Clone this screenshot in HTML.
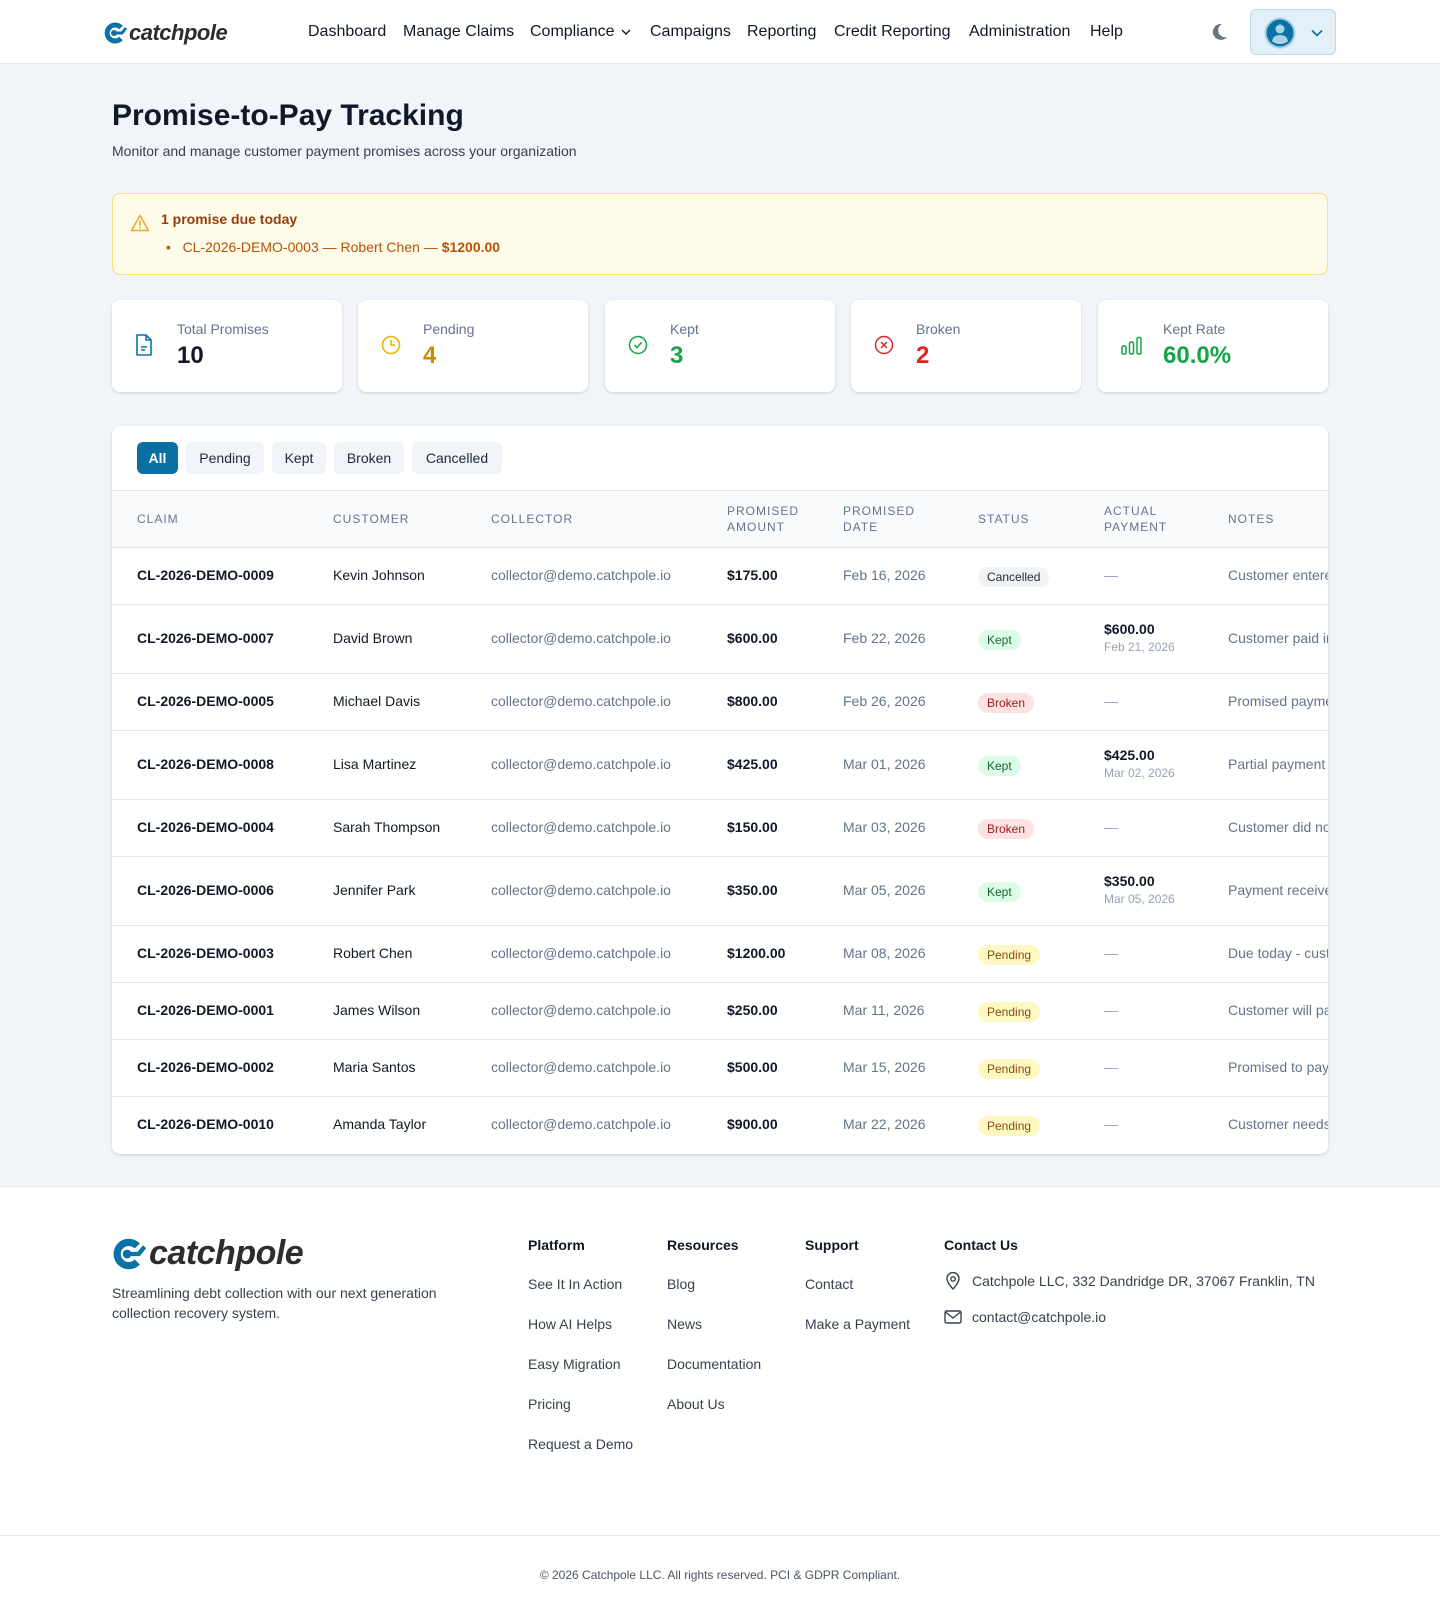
<!DOCTYPE html>
<html><head><meta charset="utf-8"><style>
*{box-sizing:border-box;margin:0;padding:0}
body{width:1440px;height:1608px;background:#f1f4f8;font-family:"Liberation Sans",sans-serif;color:#111827;position:relative;overflow:hidden}
.hdr{position:absolute;left:0;top:0;width:1440px;height:64px;background:#fff;border-bottom:1px solid #e5e7eb}
.logo{position:absolute;display:flex;align-items:center}
.logo span{font-weight:bold;font-style:italic;color:#2d2d2d;letter-spacing:-0.5px}
.nav{position:absolute;top:23px;font-size:16px;color:#111827}
.abs{position:absolute}
.card{position:absolute;background:#fff;border-radius:8px;box-shadow:0 1px 3px rgba(0,0,0,.1),0 1px 2px rgba(0,0,0,.06)}
.lbl{position:absolute;left:65px;top:21px;font-size:14px;color:#64748b}
.val{position:absolute;left:65px;top:42px;font-size:24px;font-weight:bold}
.ico{position:absolute;left:23px;top:36px}
.tab{position:absolute;top:442px;height:32px;line-height:32px;font-size:14px;border-radius:6px;background:#f1f4f8;color:#1f2937;text-align:center}
.th{position:absolute;font-size:12px;letter-spacing:1px;color:#64748b;line-height:16px}
.row{position:absolute;left:0;width:1216px;border-top:1px solid #e2e8f0;font-size:14px}
.row div{position:absolute;white-space:nowrap}
.b{font-size:12px;padding:0 9px;height:20px;line-height:20px;border-radius:10px}
.fh{position:absolute;top:1237px;font-size:14px;font-weight:bold;color:#111827}
.fl{position:absolute;font-size:14px;color:#374151}
</style></head><body>
<div class="hdr">
 <div class="logo" style="left:104px;top:20px">
  <svg width="24" height="22" viewBox="0 0 24 22"><path d="M17 5.5A8 8 0 1 0 17 16.5" fill="none" stroke="#0b72a8" stroke-width="5"/><circle cx="10" cy="11" r="3" fill="#0b72a8"/><path d="M12 11h6l4-5" fill="none" stroke="#0b72a8" stroke-width="3"/></svg>
  <span style="font-size:22px;margin-left:1px">catchpole</span>
 </div>
 <div class="nav" style="left:308px">Dashboard</div>
 <div class="nav" style="left:403px">Manage Claims</div>
 <div class="nav" style="left:530px">Compliance <svg width="10" height="8" viewBox="0 0 10 8" style="margin-left:2px"><path d="M1 2l4 4 4-4" fill="none" stroke="#111827" stroke-width="1.4"/></svg></div>
 <div class="nav" style="left:650px">Campaigns</div>
 <div class="nav" style="left:747px">Reporting</div>
 <div class="nav" style="left:834px">Credit Reporting</div>
 <div class="nav" style="left:969px">Administration</div>
 <div class="nav" style="left:1090px">Help</div>
 <svg class="abs" style="left:1209px;top:22px" width="20" height="20" viewBox="0 0 20 20"><path d="M13 2a8 8 0 1 0 5 13A7 7 0 0 1 13 2z" fill="#6b7280"/></svg>
 <div class="abs" style="left:1250px;top:9px;width:86px;height:46px;border:1px solid #b9dbea;background:#e4f0f7;border-radius:6px">
  <svg class="abs" style="left:13px;top:7px" width="32" height="32" viewBox="0 0 32 32"><circle cx="16" cy="16" r="15.5" fill="#a9d2e4"/><circle cx="16" cy="16" r="13.5" fill="#0b72a8"/><circle cx="16" cy="12" r="4.5" fill="#a9d2e4"/><path d="M8 24c1-5 5-6 8-6s7 1 8 6c-2 2-5 3-8 3s-6-1-8-3z" fill="#a9d2e4"/></svg>
  <svg class="abs" style="left:60px;top:19px" width="12" height="8" viewBox="0 0 12 8"><path d="M1 1.5l5 5 5-5" fill="none" stroke="#0b72a8" stroke-width="1.6"/></svg>
 </div>
</div>

<div class="abs" style="left:112px;top:99px;font-size:30px;font-weight:bold;color:#111827">Promise-to-Pay Tracking</div>
<div class="abs" style="left:112px;top:143px;font-size:14px;color:#374151">Monitor and manage customer payment promises across your organization</div>

<div class="abs" style="left:112px;top:193px;width:1216px;height:82px;background:#fefbe8;border:1px solid #fcdf7e;border-radius:8px">
 <svg class="abs" style="left:17px;top:20px" width="20" height="18" viewBox="0 0 20 18"><path d="M10 1.5L1.5 16.5h17z" fill="none" stroke="#f0a82a" stroke-width="1.5" stroke-linejoin="round"/><path d="M10 7v4.5M10 13.5v.5" stroke="#f0a82a" stroke-width="1.6" stroke-linecap="round"/></svg>
 <div class="abs" style="left:48px;top:17px;font-size:14px;color:#92400e;font-weight:bold">1 promise due today</div>
 <div class="abs" style="left:53px;top:45px;font-size:14px;color:#b45309">•&nbsp;&nbsp;&nbsp;CL-2026-DEMO-0003 — Robert Chen — <b>$1200.00</b></div>
</div>

<div class="card" style="left:112px;top:300px;width:230px;height:92px">
 <svg class="ico" style="top:34px" width="18" height="22" viewBox="0 0 18 22"><path d="M2 1h9l5 5v15H2z" fill="none" stroke="#0b72a8" stroke-width="1.6" stroke-linejoin="round"/><path d="M11 1v5h5M6 13h6M6 16h4" fill="none" stroke="#0b72a8" stroke-width="1.6"/></svg>
 <div class="lbl">Total Promises</div><div class="val" style="color:#111827">10</div></div>
<div class="card" style="left:358px;top:300px;width:230px;height:92px">
 <svg class="ico" style="top:35px" width="20" height="20" viewBox="0 0 20 20"><circle cx="10" cy="10" r="8.5" fill="none" stroke="#eab308" stroke-width="1.6"/><path d="M10 5v5h4" fill="none" stroke="#eab308" stroke-width="1.6"/></svg>
 <div class="lbl">Pending</div><div class="val" style="color:#ca8a04">4</div></div>
<div class="card" style="left:605px;top:300px;width:230px;height:92px">
 <svg class="ico" style="top:35px" width="20" height="20" viewBox="0 0 20 20"><circle cx="10" cy="10" r="8.5" fill="none" stroke="#16a34a" stroke-width="1.5"/><path d="M6.5 10l2.5 2.5 4.5-5" fill="none" stroke="#16a34a" stroke-width="1.5"/></svg>
 <div class="lbl">Kept</div><div class="val" style="color:#16a34a">3</div></div>
<div class="card" style="left:851px;top:300px;width:230px;height:92px">
 <svg class="ico" style="top:35px" width="20" height="20" viewBox="0 0 20 20"><circle cx="10" cy="10" r="8.5" fill="none" stroke="#dc2626" stroke-width="1.5"/><path d="M7 7l6 6M13 7l-6 6" stroke="#dc2626" stroke-width="1.5"/></svg>
 <div class="lbl">Broken</div><div class="val" style="color:#dc2626">2</div></div>
<div class="card" style="left:1098px;top:300px;width:230px;height:92px">
 <svg class="ico" style="top:36px" width="22" height="20" viewBox="0 0 22 20"><rect x="1" y="10" width="4" height="8" rx="1.5" fill="none" stroke="#16a34a" stroke-width="1.5"/><rect x="8.5" y="6" width="4" height="12" rx="1.5" fill="none" stroke="#16a34a" stroke-width="1.5"/><rect x="16" y="1.5" width="4" height="16.5" rx="1.5" fill="none" stroke="#16a34a" stroke-width="1.5"/></svg>
 <div class="lbl">Kept Rate</div><div class="val" style="color:#16a34a">60.0%</div></div>

<div class="card" style="left:112px;top:426px;width:1216px;height:728px;overflow:hidden"></div>
<div class="tab" style="left:137px;width:41px;background:#0b6fa3;color:#fff;font-weight:bold">All</div>
<div class="tab" style="left:186px;width:78px">Pending</div>
<div class="tab" style="left:272px;width:54px">Kept</div>
<div class="tab" style="left:334px;width:70px">Broken</div>
<div class="tab" style="left:412px;width:90px">Cancelled</div>

<div class="abs" style="left:112px;top:490px;width:1216px;height:664px;overflow:hidden;border-radius:0 0 8px 8px">
 <div class="abs" style="left:0;top:0;width:1216px;height:57px;background:#f8fafc;border-top:1px solid #e2e8f0"></div>
 <div class="th" style="left:25px;top:21px">CLAIM</div>
 <div class="th" style="left:221px;top:21px">CUSTOMER</div>
 <div class="th" style="left:379px;top:21px">COLLECTOR</div>
 <div class="th" style="left:615px;top:13px">PROMISED<br>AMOUNT</div>
 <div class="th" style="left:731px;top:13px">PROMISED<br>DATE</div>
 <div class="th" style="left:866px;top:21px">STATUS</div>
 <div class="th" style="left:992px;top:13px">ACTUAL<br>PAYMENT</div>
 <div class="th" style="left:1116px;top:21px">NOTES</div>
</div>

<div class="abs" style="left:0;top:1186px;width:1440px;height:422px;background:#fff;border-top:1px solid #e5e7eb"></div>
<div class="logo" style="left:112px;top:1234px">
 <svg width="36" height="32" viewBox="0 0 24 22"><path d="M17 5.5A8 8 0 1 0 17 16.5" fill="none" stroke="#0b72a8" stroke-width="5"/><circle cx="10" cy="11" r="3" fill="#0b72a8"/><path d="M12 11h6l4-5" fill="none" stroke="#0b72a8" stroke-width="3"/></svg>
 <span style="font-size:34px;margin-left:1px">catchpole</span>
</div>
<div class="abs" style="left:112px;top:1283px;font-size:14px;line-height:20px;color:#374151;width:360px">Streamlining debt collection with our next generation collection recovery system.</div>
<div class="fh" style="left:528px">Platform</div>
<div class="fh" style="left:667px">Resources</div>
<div class="fh" style="left:805px">Support</div>
<div class="fh" style="left:944px">Contact Us</div>
<div class="fl" style="left:528px;top:1276px">See It In Action</div>
<div class="fl" style="left:528px;top:1316px">How AI Helps</div>
<div class="fl" style="left:528px;top:1356px">Easy Migration</div>
<div class="fl" style="left:528px;top:1396px">Pricing</div>
<div class="fl" style="left:528px;top:1436px">Request a Demo</div>
<div class="fl" style="left:667px;top:1276px">Blog</div>
<div class="fl" style="left:667px;top:1316px">News</div>
<div class="fl" style="left:667px;top:1356px">Documentation</div>
<div class="fl" style="left:667px;top:1396px">About Us</div>
<div class="fl" style="left:805px;top:1276px">Contact</div>
<div class="fl" style="left:805px;top:1316px">Make a Payment</div>
<svg class="abs" style="left:945px;top:1272px" width="16" height="18" viewBox="0 0 16 18"><path d="M8 17s6-6 6-10.5A6 6 0 0 0 2 6.5C2 11 8 17 8 17z" fill="none" stroke="#374151" stroke-width="1.4"/><circle cx="8" cy="7" r="2.2" fill="none" stroke="#374151" stroke-width="1.4"/></svg>
<div class="fl" style="left:972px;top:1273px">Catchpole LLC, 332 Dandridge DR, 37067 Franklin, TN</div>
<svg class="abs" style="left:944px;top:1310px" width="18" height="14" viewBox="0 0 18 14"><rect x="1" y="1" width="16" height="12" rx="1.5" fill="none" stroke="#374151" stroke-width="1.4"/><path d="M1.5 2l7.5 6 7.5-6" fill="none" stroke="#374151" stroke-width="1.4"/></svg>
<div class="fl" style="left:972px;top:1309px">contact@catchpole.io</div>
<div class="abs" style="left:0;top:1535px;width:1440px;border-top:1px solid #e5e7eb"></div>
<div class="abs" style="left:0;top:1568px;width:1440px;text-align:center;font-size:12px;color:#4b5563">© 2026 Catchpole LLC. All rights reserved. PCI &amp; GDPR Compliant.</div>

<div class="abs" style="left:112px;top:490px;width:1216px;height:664px;overflow:hidden">
 <div class="row" style="top:57px;height:57px"><div style="left:25px;top:19px;font-weight:bold;color:#111827">CL-2026-DEMO-0009</div><div style="left:221px;top:19px">Kevin Johnson</div><div style="left:379px;top:19px;color:#64748b">collector@demo.catchpole.io</div><div style="left:615px;top:19px;font-weight:bold">$175.00</div><div style="left:731px;top:19px;color:#64748b">Feb 16, 2026</div><div class="b" style="left:866px;top:19px;background:#f1f2f4;color:#1f2937">Cancelled</div><div style="left:992px;top:19px;color:#94a3b8">—</div><div style="left:1116px;top:19px;color:#64748b">Customer entered</div></div>
 <div class="row" style="top:114px;height:69px"><div style="left:25px;top:25px;font-weight:bold">CL-2026-DEMO-0007</div><div style="left:221px;top:25px">David Brown</div><div style="left:379px;top:25px;color:#64748b">collector@demo.catchpole.io</div><div style="left:615px;top:25px;font-weight:bold">$600.00</div><div style="left:731px;top:25px;color:#64748b">Feb 22, 2026</div><div class="b" style="left:866px;top:25px;background:#dcfce7;color:#166534">Kept</div><div style="left:992px;top:16px;font-weight:bold">$600.00</div><div style="left:992px;top:35px;font-size:12px;color:#94a3b8">Feb 21, 2026</div><div style="left:1116px;top:25px;color:#64748b">Customer paid in full</div></div>
 <div class="row" style="top:183px;height:57px"><div style="left:25px;top:19px;font-weight:bold">CL-2026-DEMO-0005</div><div style="left:221px;top:19px">Michael Davis</div><div style="left:379px;top:19px;color:#64748b">collector@demo.catchpole.io</div><div style="left:615px;top:19px;font-weight:bold">$800.00</div><div style="left:731px;top:19px;color:#64748b">Feb 26, 2026</div><div class="b" style="left:866px;top:19px;background:#fee2e2;color:#991b1b">Broken</div><div style="left:992px;top:19px;color:#94a3b8">—</div><div style="left:1116px;top:19px;color:#64748b">Promised payment</div></div>
 <div class="row" style="top:240px;height:69px"><div style="left:25px;top:25px;font-weight:bold">CL-2026-DEMO-0008</div><div style="left:221px;top:25px">Lisa Martinez</div><div style="left:379px;top:25px;color:#64748b">collector@demo.catchpole.io</div><div style="left:615px;top:25px;font-weight:bold">$425.00</div><div style="left:731px;top:25px;color:#64748b">Mar 01, 2026</div><div class="b" style="left:866px;top:25px;background:#dcfce7;color:#166534">Kept</div><div style="left:992px;top:16px;font-weight:bold">$425.00</div><div style="left:992px;top:35px;font-size:12px;color:#94a3b8">Mar 02, 2026</div><div style="left:1116px;top:25px;color:#64748b">Partial payment</div></div>
 <div class="row" style="top:309px;height:57px"><div style="left:25px;top:19px;font-weight:bold">CL-2026-DEMO-0004</div><div style="left:221px;top:19px">Sarah Thompson</div><div style="left:379px;top:19px;color:#64748b">collector@demo.catchpole.io</div><div style="left:615px;top:19px;font-weight:bold">$150.00</div><div style="left:731px;top:19px;color:#64748b">Mar 03, 2026</div><div class="b" style="left:866px;top:19px;background:#fee2e2;color:#991b1b">Broken</div><div style="left:992px;top:19px;color:#94a3b8">—</div><div style="left:1116px;top:19px;color:#64748b">Customer did not</div></div>
 <div class="row" style="top:366px;height:69px"><div style="left:25px;top:25px;font-weight:bold">CL-2026-DEMO-0006</div><div style="left:221px;top:25px">Jennifer Park</div><div style="left:379px;top:25px;color:#64748b">collector@demo.catchpole.io</div><div style="left:615px;top:25px;font-weight:bold">$350.00</div><div style="left:731px;top:25px;color:#64748b">Mar 05, 2026</div><div class="b" style="left:866px;top:25px;background:#dcfce7;color:#166534">Kept</div><div style="left:992px;top:16px;font-weight:bold">$350.00</div><div style="left:992px;top:35px;font-size:12px;color:#94a3b8">Mar 05, 2026</div><div style="left:1116px;top:25px;color:#64748b">Payment received</div></div>
 <div class="row" style="top:435px;height:57px"><div style="left:25px;top:19px;font-weight:bold">CL-2026-DEMO-0003</div><div style="left:221px;top:19px">Robert Chen</div><div style="left:379px;top:19px;color:#64748b">collector@demo.catchpole.io</div><div style="left:615px;top:19px;font-weight:bold">$1200.00</div><div style="left:731px;top:19px;color:#64748b">Mar 08, 2026</div><div class="b" style="left:866px;top:19px;background:#fef9c3;color:#854d0e">Pending</div><div style="left:992px;top:19px;color:#94a3b8">—</div><div style="left:1116px;top:19px;color:#64748b">Due today - customer</div></div>
 <div class="row" style="top:492px;height:57px"><div style="left:25px;top:19px;font-weight:bold">CL-2026-DEMO-0001</div><div style="left:221px;top:19px">James Wilson</div><div style="left:379px;top:19px;color:#64748b">collector@demo.catchpole.io</div><div style="left:615px;top:19px;font-weight:bold">$250.00</div><div style="left:731px;top:19px;color:#64748b">Mar 11, 2026</div><div class="b" style="left:866px;top:19px;background:#fef9c3;color:#854d0e">Pending</div><div style="left:992px;top:19px;color:#94a3b8">—</div><div style="left:1116px;top:19px;color:#64748b">Customer will pay</div></div>
 <div class="row" style="top:549px;height:57px"><div style="left:25px;top:19px;font-weight:bold">CL-2026-DEMO-0002</div><div style="left:221px;top:19px">Maria Santos</div><div style="left:379px;top:19px;color:#64748b">collector@demo.catchpole.io</div><div style="left:615px;top:19px;font-weight:bold">$500.00</div><div style="left:731px;top:19px;color:#64748b">Mar 15, 2026</div><div class="b" style="left:866px;top:19px;background:#fef9c3;color:#854d0e">Pending</div><div style="left:992px;top:19px;color:#94a3b8">—</div><div style="left:1116px;top:19px;color:#64748b">Promised to pay</div></div>
 <div class="row" style="top:606px;height:57px"><div style="left:25px;top:19px;font-weight:bold">CL-2026-DEMO-0010</div><div style="left:221px;top:19px">Amanda Taylor</div><div style="left:379px;top:19px;color:#64748b">collector@demo.catchpole.io</div><div style="left:615px;top:19px;font-weight:bold">$900.00</div><div style="left:731px;top:19px;color:#64748b">Mar 22, 2026</div><div class="b" style="left:866px;top:19px;background:#fef9c3;color:#854d0e">Pending</div><div style="left:992px;top:19px;color:#94a3b8">—</div><div style="left:1116px;top:19px;color:#64748b">Customer needs</div></div>
</div>
</body></html>
